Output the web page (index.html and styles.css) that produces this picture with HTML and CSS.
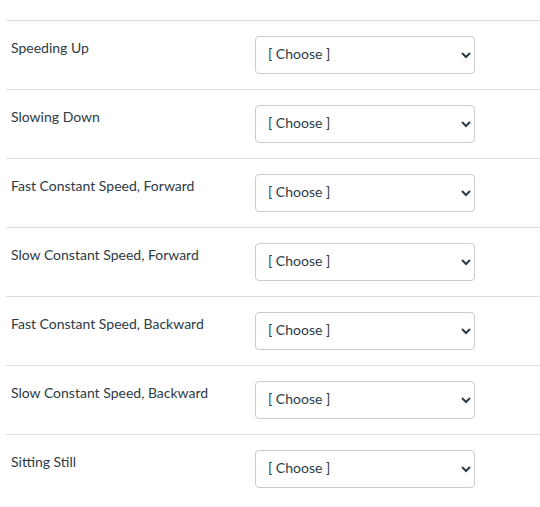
FILE: index.html
```html
<!DOCTYPE html>
<html lang="en">
<head>
<meta charset="utf-8">
<title>Matching</title>
<link rel="stylesheet" href="styles.css">
</head>
<body>
<div class="list">
  <div class="row"><label class="label">Speeding Up</label><select class="choice"><option>[ Choose ]</option></select></div>
  <div class="row"><label class="label">Slowing Down</label><select class="choice"><option>[ Choose ]</option></select></div>
  <div class="row"><label class="label">Fast Constant Speed, Forward</label><select class="choice"><option>[ Choose ]</option></select></div>
  <div class="row"><label class="label">Slow Constant Speed, Forward</label><select class="choice"><option>[ Choose ]</option></select></div>
  <div class="row"><label class="label">Fast Constant Speed, Backward</label><select class="choice"><option>[ Choose ]</option></select></div>
  <div class="row"><label class="label">Slow Constant Speed, Backward</label><select class="choice"><option>[ Choose ]</option></select></div>
  <div class="row"><label class="label">Sitting Still</label><select class="choice"><option>[ Choose ]</option></select></div>
</div>
</body>
</html>
```
FILE: styles.css
```css
html, body {
  margin: 0;
  background: #fff;
}
body {
  font-family: Lato, "Liberation Sans", sans-serif;
  font-size: 14px;
  color: #2d3b45;
}
.list {
  padding: 20px 0 0 6px;
}
.row {
  display: flex;
  align-items: flex-start;
  border-top: 1px solid #dddddd;
  padding: 15px 0 15px 5px;
}
.label {
  width: 244px;
  flex: none;
  line-height: 20px;
  padding-top: 2px;
}
.choice {
  width: 220px;
  height: 38px;
  box-sizing: border-box;
  border: 1px solid #c7cdd1;
  border-radius: 4px;
  background: #fff;
  color: #2d3b45;
  font-family: Lato, "Liberation Sans", sans-serif;
  font-size: 14px;
  padding: 0 3px 4px 8px;
}
```
